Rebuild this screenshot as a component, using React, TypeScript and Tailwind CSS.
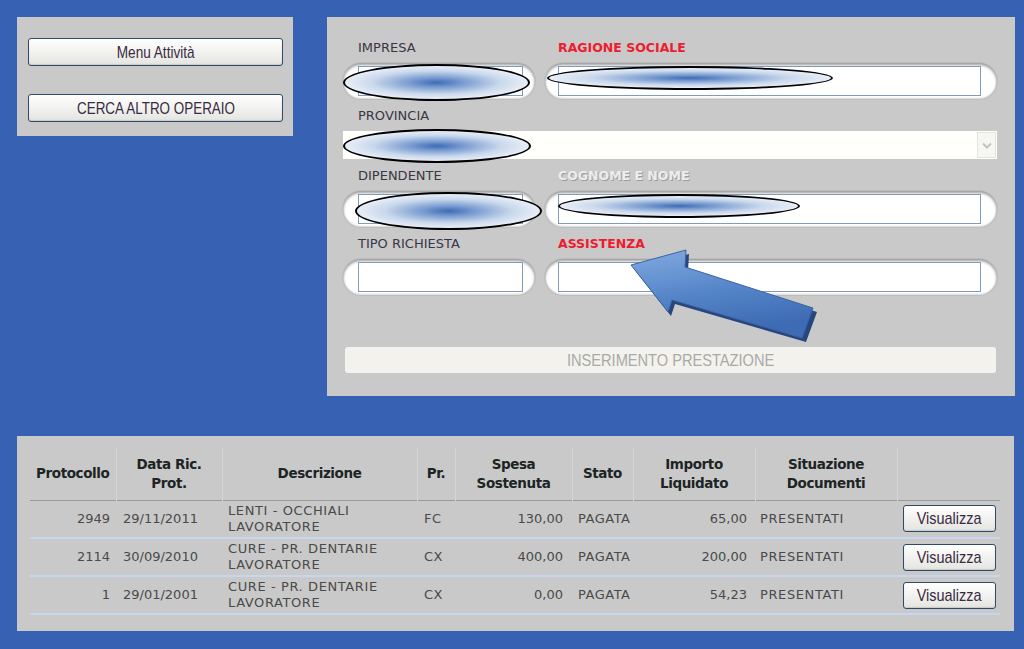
import React from "react";

const rows = [
  { prot: "2949", data: "29/11/2011", desc: ["LENTI - OCCHIALI", "LAVORATORE"], pr: "FC", spesa: "130,00", stato: "PAGATA", importo: "65,00", doc: "PRESENTATI" },
  { prot: "2114", data: "30/09/2010", desc: ["CURE - PR. DENTARIE", "LAVORATORE"], pr: "CX", spesa: "400,00", stato: "PAGATA", importo: "200,00", doc: "PRESENTATI" },
  { prot: "1", data: "29/01/2001", desc: ["CURE - PR. DENTARIE", "LAVORATORE"], pr: "CX", spesa: "0,00", stato: "PAGATA", importo: "54,23", doc: "PRESENTATI" },
];

function Oval({ className }: { className: string }) {
  // redaction blob drawn over the fields
  return (
    <div
      className={`absolute rounded-[50%] border-2 border-black bg-[radial-gradient(closest-side,#3d6bb5_0%,#7b9dd1_30%,#c9d8ec_70%,#e8eef7_100%)] ${className}`}
    />
  );
}

function Pill({ className, inputClass }: { className: string; inputClass: string }) {
  return (
    <div
      className={`h-[36px] rounded-full bg-white flex items-center shadow-[inset_0_2px_3px_rgba(0,0,0,0.4),inset_0_-1px_2px_rgba(0,0,0,0.15),0_0_0_1px_#bdbdbd] ${className}`}
    >
      <div className={`h-[30px] border border-[#7f9db9] bg-white ${inputClass}`} />
    </div>
  );
}

function OldButton({ label, className, scale }: { label: string; className: string; scale: string }) {
  return (
    <button
      className={`rounded-[3px] border border-[#2f4a66] bg-gradient-to-b from-white to-[#e4e4e0] shadow-[inset_0_-1px_1px_rgba(0,0,0,0.12)] font-['Liberation_Sans',Arial,sans-serif] text-[17px] leading-none text-[#382b40] flex items-center justify-center whitespace-nowrap ${className}`}
    >
      <span className={`inline-block ${scale}`}>{label}</span>
    </button>
  );
}

export default function App() {
  return (
    <div className="min-h-[649px] w-full bg-[#3762b3] pt-[17px] pl-[17px] font-['DejaVu_Sans',sans-serif]">
      <div className="flex items-start gap-[34px]">
        {/* left panel */}
        <div className="w-[276px] h-[119px] bg-[#c9c9c9] pt-[21px] pl-[11px] flex flex-col gap-[28px]">
          <OldButton label="Menu Attività" className="w-[255px] h-[28px]" scale="scale-x-[0.8]" />
          <OldButton label="CERCA ALTRO OPERAIO" className="w-[255px] h-[28px]" scale="scale-x-[0.79]" />
        </div>

        {/* right panel */}
        <div className="relative w-[688px] h-[379px] bg-[#c9c9c9] pl-[16px] pt-[14px]">
          <div className="flex h-[32px] items-center pt-[2px] text-[13px]">
            <div className="w-[215px] pl-[15px] text-[#3a3644]">IMPRESA</div>
            <div className="font-bold text-[12.5px] text-[#ee1c2e]">RAGIONE SOCIALE</div>
          </div>
          <div className="flex gap-[10px]">
            <Pill className="w-[192px]" inputClass="ml-[15px] w-[165px]" />
            <Pill className="w-[452px]" inputClass="ml-[13px] w-[423px]" />
          </div>

          <div className="flex h-[32px] items-center pt-[2px] text-[13px]">
            <div className="pl-[15px] text-[#3a3644]">PROVINCIA</div>
          </div>
          <div className="w-[654px] h-[28px] bg-[#fffffb] flex justify-end items-center pr-[1px]">
            <div className="w-[19px] h-[26px] border border-[#e4e4dc] bg-[#f6f6f2] flex items-center justify-center">
              <svg width="10" height="7" viewBox="0 0 10 7">
                <path d="M1 1.5 L5 5.5 L9 1.5" fill="none" stroke="#c2c2c2" strokeWidth="2" />
              </svg>
            </div>
          </div>

          <div className="flex h-[32px] items-center pt-[2px] text-[13px]">
            <div className="w-[215px] pl-[15px] text-[#3a3644]">DIPENDENTE</div>
            <div className="font-bold text-[12.5px] text-[#ededed] [text-shadow:1px_1px_0_#9c9c9c]">COGNOME E NOME</div>
          </div>
          <div className="flex gap-[10px]">
            <Pill className="w-[192px]" inputClass="ml-[15px] w-[165px]" />
            <Pill className="w-[452px]" inputClass="ml-[13px] w-[423px]" />
          </div>

          <div className="flex h-[32px] items-center pt-[2px] text-[13px]">
            <div className="w-[215px] pl-[15px] text-[#3a3644]">TIPO RICHIESTA</div>
            <div className="font-bold text-[12.5px] text-[#ee1c2e]">ASSISTENZA</div>
          </div>
          <div className="flex gap-[10px]">
            <Pill className="w-[192px]" inputClass="ml-[15px] w-[165px]" />
            <Pill className="w-[452px]" inputClass="ml-[13px] w-[423px]" />
          </div>

          <div className="mt-[52px] ml-[2px] w-[651px] h-[26px] rounded-[3px] bg-[#f3f2ec] flex items-center justify-center font-['Liberation_Sans',Arial,sans-serif] text-[17px] leading-none text-[#a9a9a9] whitespace-nowrap">
            <span className="inline-block scale-x-[0.86]">INSERIMENTO PRESTAZIONE</span>
          </div>

          <Oval className="left-[16px] top-[47px] w-[187px] h-[37px]" />
          <Oval className="left-[220px] top-[49px] w-[286px] h-[24px]" />
          <Oval className="left-[16px] top-[112px] w-[188px] h-[34px]" />
          <Oval className="left-[28px] top-[175px] w-[187px] h-[38px]" />
          <Oval className="left-[231px] top-[177px] w-[242px] h-[24px]" />

          {/* arrow pointing at ASSISTENZA */}
          <svg className="absolute left-[290px] top-[225px]" width="210" height="110" viewBox="0 0 210 110">
            <defs>
              <linearGradient id="arrowFill" x1="0" y1="0" x2="0.3" y2="1">
                <stop offset="0" stopColor="#82aae0" />
                <stop offset="0.55" stopColor="#5585c8" />
                <stop offset="1" stopColor="#3d6bb4" />
              </linearGradient>
            </defs>
            <polygon points="17,27 72,12 71,29 200,70 189,100 58,62 54,74" fill="#27467c" />
            <polygon
              points="14,23 69,8 68,25 196,66 185,96 55,58 51,70"
              fill="url(#arrowFill)"
              stroke="#3a63a6"
              strokeWidth="1"
              strokeLinejoin="round"
            />
          </svg>
        </div>
      </div>

      {/* bottom table panel */}
      <div className="mt-[40px] w-[997px] h-[195px] bg-[#c9c9c9] pt-[12px] pl-[13px]">
        <table className="w-[970px] table-fixed border-collapse text-[13px] text-[#4a4a4a]">
          <colgroup>
            <col className="w-[86px]" />
            <col className="w-[106px]" />
            <col className="w-[195px]" />
            <col className="w-[38px]" />
            <col className="w-[117px]" />
            <col className="w-[61px]" />
            <col className="w-[122px]" />
            <col className="w-[142px]" />
            <col className="w-[103px]" />
          </colgroup>
          <thead>
            <tr className="h-[52px] border-b border-[#9a9a9a] text-[13.5px] font-bold text-[#1c2424] leading-[19px] tracking-[-0.4px]">
              <th className="border-r border-[#d5d5d5] font-bold">Protocollo</th>
              <th className="border-r border-[#d5d5d5] font-bold">Data Ric.<br />Prot.</th>
              <th className="border-r border-[#d5d5d5] font-bold">Descrizione</th>
              <th className="border-r border-[#d5d5d5] font-bold">Pr.</th>
              <th className="border-r border-[#d5d5d5] font-bold">Spesa<br />Sostenuta</th>
              <th className="border-r border-[#d5d5d5] font-bold">Stato</th>
              <th className="border-r border-[#d5d5d5] font-bold">Importo<br />Liquidato</th>
              <th className="border-r border-[#d5d5d5] font-bold">Situazione<br />Documenti</th>
              <th className="font-bold"></th>
            </tr>
          </thead>
          <tbody>
            {rows.map((r) => (
              <tr key={r.prot} className="h-[38px] border-b-2 border-[#c5d6ee]">
                <td className="text-right pr-[6px]">{r.prot}</td>
                <td className="pl-[7px]">{r.data}</td>
                <td className="pl-[6px] leading-[16px] tracking-[0.6px]">
                  {r.desc[0]}
                  <br />
                  {r.desc[1]}
                </td>
                <td className="pl-[7px] tracking-[0.5px]">{r.pr}</td>
                <td className="text-right pr-[9px]">{r.spesa}</td>
                <td className="pl-[6px] tracking-[0.5px]">{r.stato}</td>
                <td className="text-right pr-[8px]">{r.importo}</td>
                <td className="pl-[5px] tracking-[0.6px]">{r.doc}</td>
                <td className="pl-[6px]">
                  <OldButton label="Visualizza" className="w-[93px] h-[27px]" scale="scale-x-[0.85]" />
                </td>
              </tr>
            ))}
          </tbody>
        </table>
      </div>
    </div>
  );
}
